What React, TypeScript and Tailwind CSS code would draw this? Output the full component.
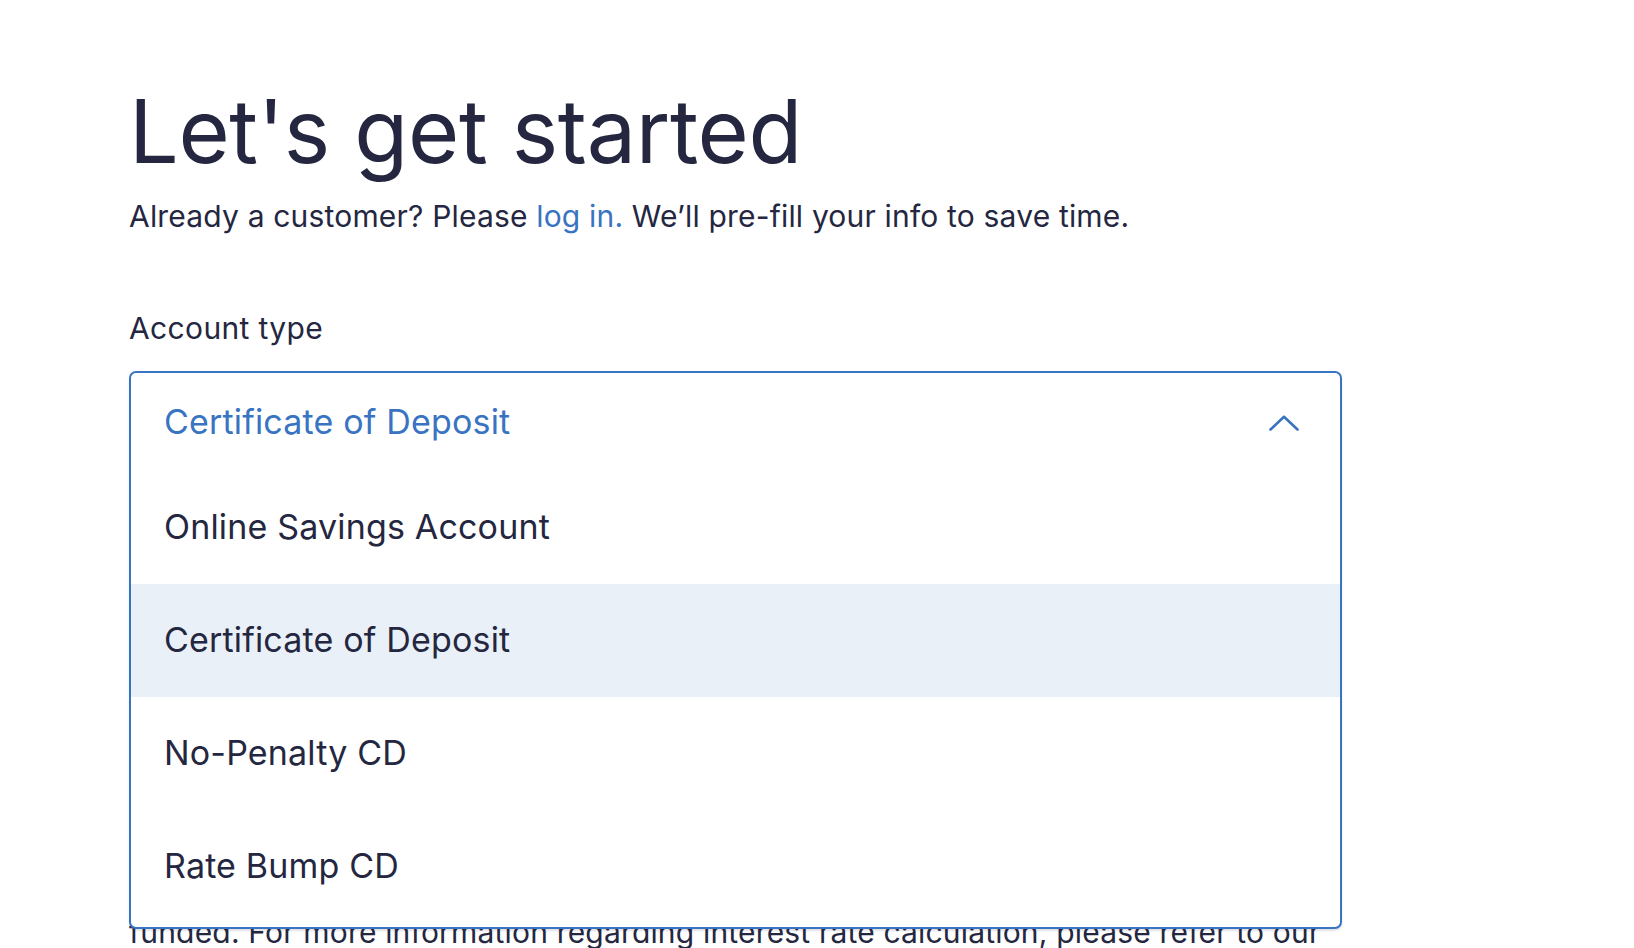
const options = ["Online Savings Account", "Certificate of Deposit", "No-Penalty CD", "Rate Bump CD"]

export default function App() {
  const selected = "Certificate of Deposit"

  return (
    <div className="min-h-screen bg-white font-['Inter',sans-serif] text-[#24273f] overflow-hidden h-[948px]">
      <div className="pl-[129px] pt-[87px] w-[1342px]">
        <h1 className="text-[88px] leading-none tracking-[-0.004em] font-normal">Let's get started</h1>
        <p className="mt-[23px] text-[30px] leading-[1.2] tracking-[0.006em]">
          Already a customer? Please <a className="text-[#3874c2]">log in.</a> We’ll pre-fill your info to save time.
        </p>

        <label className="block mt-[76px] text-[30px] leading-[1.2] tracking-[0.012em]">Account type</label>

        <div className="relative mt-[25px]">
          {/* closed select sits here */}
          <div className="h-[98px]" />

          <p className="mt-[22px] text-[30px] leading-[42px] whitespace-nowrap tracking-[0.006em]">
            <span className="block">Rates are variable and may change after the account is opened.</span>
            <span className="block">Interest is compounded daily and credited monthly.</span>
            <span className="block">Minimum deposit requirements may apply to some terms.</span>
            <span className="block">Early withdrawal penalties may apply.</span>
            <span className="block">The annual percentage yield assumes interest remains on deposit.</span>
            <span className="block">A fee could reduce earnings on the account.</span>
            <span className="block">Terms range from three months to five years.</span>
            <span className="block">You may add funds during the first ten days.</span>
            <span className="block">Your CD will renew automatically at maturity.</span>
            <span className="block">Interest begins to accrue on the business day your account is</span>
            <span className="block">funded. For more information regarding interest rate calculation, please refer to our</span>
          </p>

          <div className="absolute top-0 left-0 right-0 z-10 bg-white border-2 border-[#3874c2] rounded-[7px] shadow-[0_2px_2px_rgba(40,60,90,0.15)] pb-[4px]">
            <div className="h-[98px] flex items-center justify-between pl-[33px] pr-[41px]">
              <span className="text-[34px] leading-[1.2] tracking-[0.005em] text-[#3874c2]">{selected}</span>
              <svg width="30" height="16" viewBox="0 0 30 16" fill="none" className="mt-[2px]">
                <polyline points="1.5,14.5 15,1.8 28.5,14.5" stroke="#3874c2" strokeWidth="2.6" strokeLinecap="round" strokeLinejoin="round" />
              </svg>
            </div>
            {options.map((o) => (
              <div
                key={o}
                className={
                  o === selected
                    ? "h-[113px] flex items-center pl-[33px] bg-[#e9f0f8]"
                    : "h-[113px] flex items-center pl-[33px]"
                }
              >
                <span className="text-[34px] leading-[1.2] tracking-[0.005em]">{o}</span>
              </div>
            ))}
          </div>
        </div>
      </div>
    </div>
  )
}
